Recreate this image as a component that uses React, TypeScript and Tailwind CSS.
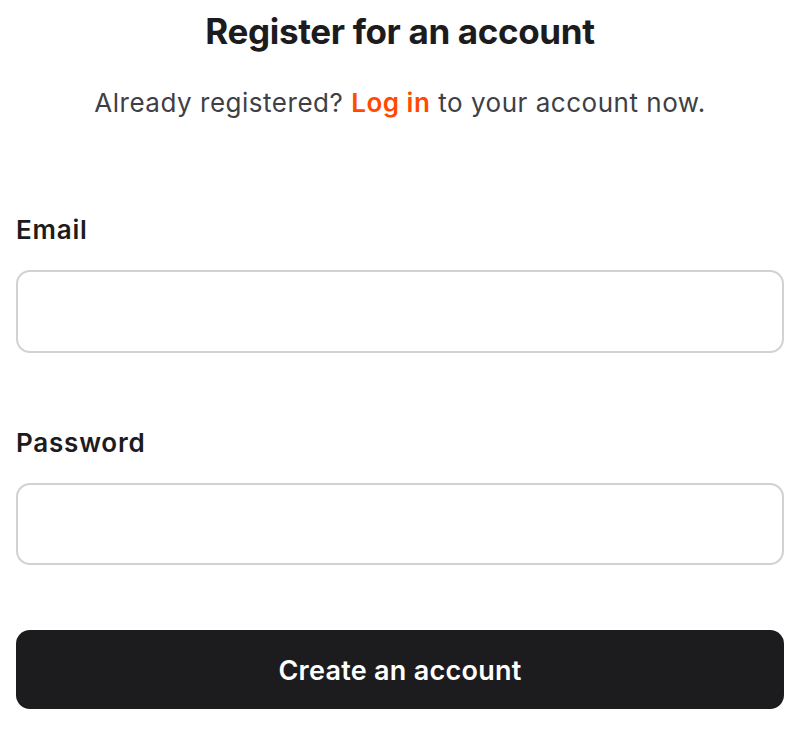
export default function App() {
  return (
    <div className="min-h-screen bg-white pl-4 pr-[14px] font-['Inter',sans-serif]">
      <div className="pt-[11px] text-center">
        <h1 className="text-[35px] leading-[40px] font-bold tracking-[-0.01em] text-[#1c1c1e]">
          Register for an account
        </h1>
        <p className="mt-[36px] text-[26px] leading-[32px] tracking-[0.02em] text-[#3f3f46]">
          Already registered?{" "}
          <a href="#" className="font-semibold text-[#ff4a00]">
            Log in
          </a>{" "}
          to your account now.
        </p>
      </div>

      <form className="mt-[95px] flex flex-col">
        <label className="text-[26px] leading-[32px] font-semibold tracking-[0.03em] text-[#1c1c1e]">Email</label>
        <input
          type="email"
          className="mt-[24px] h-[83px] rounded-[14px] border-2 border-[#d1d1d6] px-5 text-[24px] outline-none"
        />

        <label className="mt-[74px] text-[26px] leading-[32px] font-semibold tracking-[0.03em] text-[#1c1c1e]">
          Password
        </label>
        <input
          type="password"
          className="mt-[24px] h-[82px] rounded-[14px] border-2 border-[#d1d1d6] px-5 text-[24px] outline-none"
        />

        <button
          type="submit"
          className="mt-[65px] h-[79px] rounded-[14px] bg-[#1c1c1e] pt-[3px] text-[27px] font-semibold tracking-[0.01em] text-white"
        >
          Create an account
        </button>
      </form>
    </div>
  );
}
